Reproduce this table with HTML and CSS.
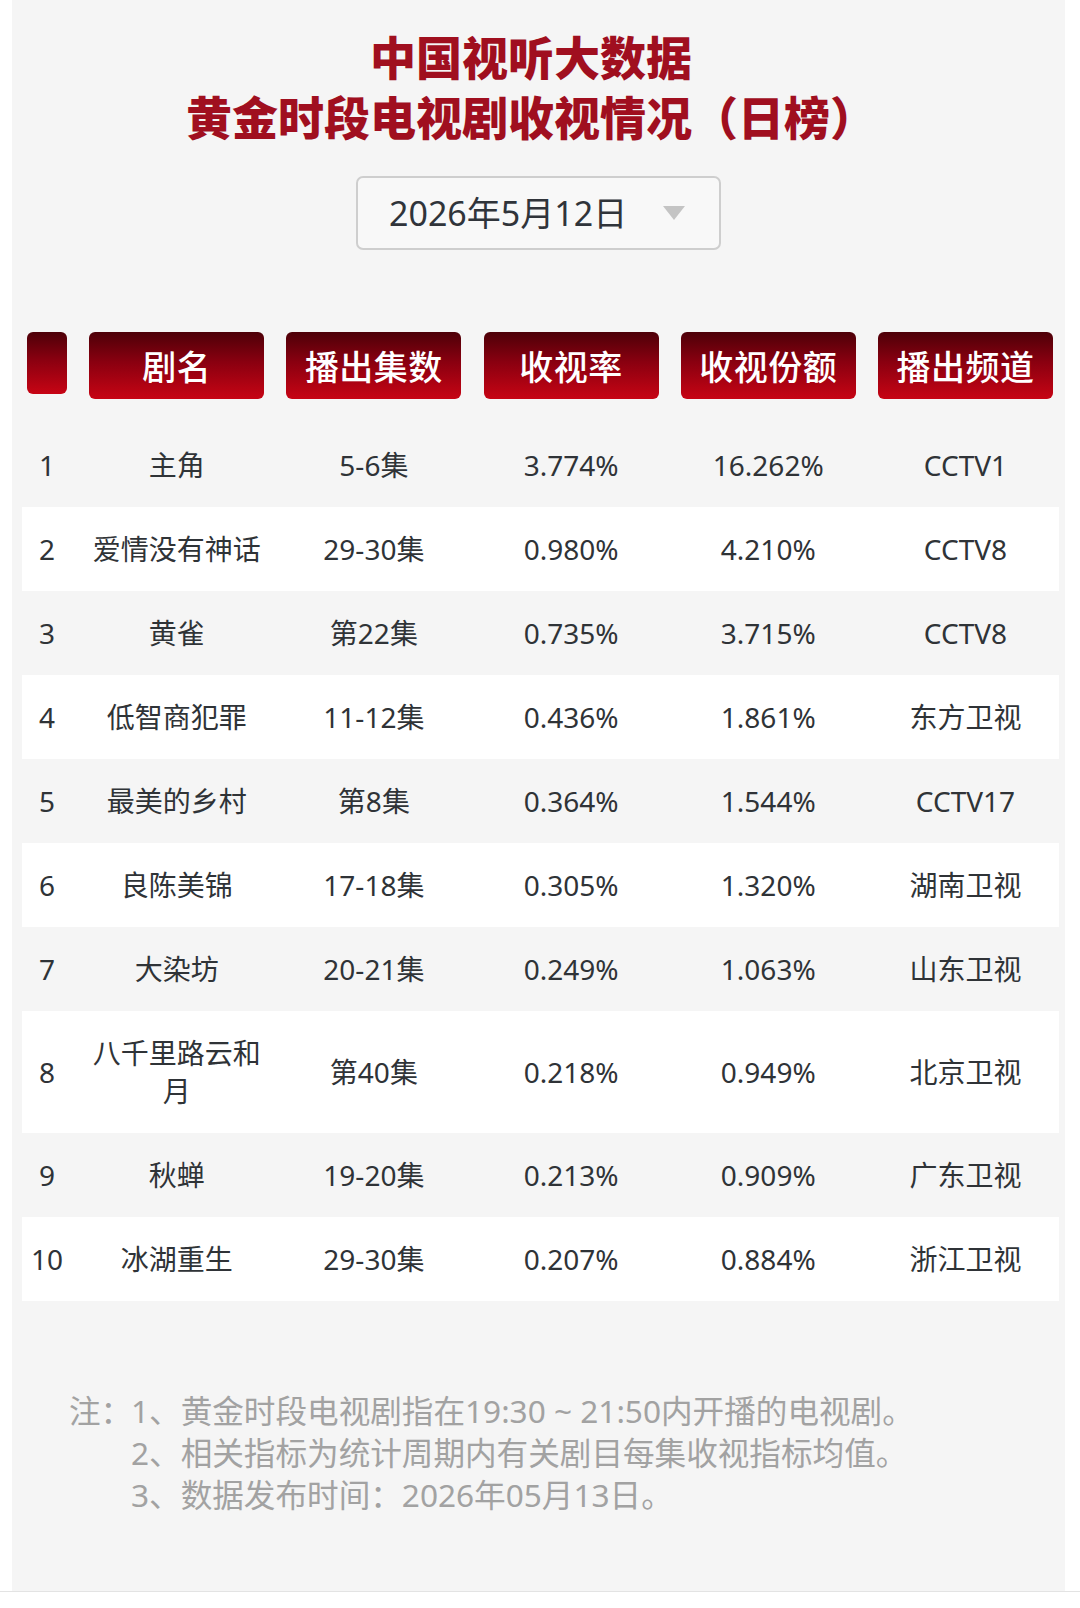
FILE: index.html
```html
<!DOCTYPE html>
<html lang="zh-CN">
<head>
<meta charset="utf-8">
<title>中国视听大数据 黄金时段电视剧收视情况（日榜）</title>
<link rel="stylesheet" href="styles.css">
</head>
<body>
<div class="page">
  <div class="panel">
    <h1 class="title">
      <span>中国视听大数据</span>
      <span>黄金时段电视剧收视情况（日榜）</span>
    </h1>
    <div class="date-row">
      <div class="date-select">
        <span class="date-text">2026年5月12日</span>
        <span class="caret"></span>
      </div>
    </div>
    <div class="table">
      <div class="thead">
        <div class="th th-idx"></div>
        <div class="th">剧名</div>
        <div class="th">播出集数</div>
        <div class="th">收视率</div>
        <div class="th">收视份额</div>
        <div class="th">播出频道</div>
      </div>
      <div class="tbody">
        <div class="row"><div class="cell idx">1</div><div class="cell">主角</div><div class="cell">5-6集</div><div class="cell">3.774%</div><div class="cell">16.262%</div><div class="cell">CCTV1</div></div>
        <div class="row"><div class="cell idx">2</div><div class="cell">爱情没有神话</div><div class="cell">29-30集</div><div class="cell">0.980%</div><div class="cell">4.210%</div><div class="cell">CCTV8</div></div>
        <div class="row"><div class="cell idx">3</div><div class="cell">黄雀</div><div class="cell">第22集</div><div class="cell">0.735%</div><div class="cell">3.715%</div><div class="cell">CCTV8</div></div>
        <div class="row"><div class="cell idx">4</div><div class="cell">低智商犯罪</div><div class="cell">11-12集</div><div class="cell">0.436%</div><div class="cell">1.861%</div><div class="cell">东方卫视</div></div>
        <div class="row"><div class="cell idx">5</div><div class="cell">最美的乡村</div><div class="cell">第8集</div><div class="cell">0.364%</div><div class="cell">1.544%</div><div class="cell">CCTV17</div></div>
        <div class="row"><div class="cell idx">6</div><div class="cell">良陈美锦</div><div class="cell">17-18集</div><div class="cell">0.305%</div><div class="cell">1.320%</div><div class="cell">湖南卫视</div></div>
        <div class="row"><div class="cell idx">7</div><div class="cell">大染坊</div><div class="cell">20-21集</div><div class="cell">0.249%</div><div class="cell">1.063%</div><div class="cell">山东卫视</div></div>
        <div class="row"><div class="cell idx">8</div><div class="cell">八千里路云和月</div><div class="cell">第40集</div><div class="cell">0.218%</div><div class="cell">0.949%</div><div class="cell">北京卫视</div></div>
        <div class="row"><div class="cell idx">9</div><div class="cell">秋蝉</div><div class="cell">19-20集</div><div class="cell">0.213%</div><div class="cell">0.909%</div><div class="cell">广东卫视</div></div>
        <div class="row"><div class="cell idx">10</div><div class="cell">冰湖重生</div><div class="cell">29-30集</div><div class="cell">0.207%</div><div class="cell">0.884%</div><div class="cell">浙江卫视</div></div>
      </div>
    </div>
    <div class="notes">
      <div class="notes-label">注：</div>
      <div class="notes-list">
        <div>1、黄金时段电视剧指在19:30 ~ 21:50内开播的电视剧。</div>
        <div>2、相关指标为统计周期内有关剧目每集收视指标均值。</div>
        <div>3、数据发布时间：2026年05月13日。</div>
      </div>
    </div>
  </div>
</div>
</body>
</html>
```

FILE: styles.css
```css
html, body {
  margin: 0;
  padding: 0;
  background: #ffffff;
}

body {
  font-family: "Noto Sans", "Noto Sans CJK SC", sans-serif;
  color: #2f3337;
}

.page {
  width: 1080px;
  border-bottom: 1px solid #e3e3e3;
}

.panel {
  margin-left: 12px;
  width: 1053px;
  height: 1591px;
  box-sizing: border-box;
  background: #f5f5f5;
  padding-top: 25px;
}

.title {
  margin: 0;
  padding-right: 15px;
  display: flex;
  flex-direction: column;
  align-items: center;
  font-family: "Noto Sans CJK SC", sans-serif;
  font-size: 46px;
  line-height: 60px;
  font-weight: 900;
  color: #a00f1f;
}

.date-row {
  margin-top: 31px;
  display: flex;
  justify-content: center;
}

.date-select {
  width: 365px;
  height: 74px;
  box-sizing: border-box;
  border: 2px solid #cecece;
  border-radius: 7px;
  background: #f8f8f8;
  display: flex;
  align-items: center;
  padding-left: 31px;
  padding-right: 34px;
}

.date-text {
  font-size: 34px;
  color: #30343a;
  line-height: 1;
}

.caret {
  margin-left: auto;
  width: 0;
  height: 0;
  border-left: 11px solid transparent;
  border-right: 11px solid transparent;
  border-top: 14px solid #c4c4c4;
}

.table {
  margin-top: 82px;
  margin-left: 10px;
  width: 1037px;
}

.thead,
.row {
  display: grid;
  grid-template-columns: 40px repeat(5, 175px);
  column-gap: 22.2px;
  padding-left: 5px;
}

.thead {
  align-items: start;
}

.th {
  height: 67px;
  border-radius: 6px;
  background: linear-gradient(to bottom, #4d0008 0%, #8a0010 45%, #c70414 100%);
  color: #ffffff;
  font-family: "Noto Sans CJK SC", sans-serif;
  font-size: 34px;
  font-weight: 500;
  display: flex;
  align-items: center;
  justify-content: center;
  letter-spacing: 0.5px;
}

.th-idx {
  height: 62px;
}

.tbody {
  margin-top: 24px;
}

.row {
  align-items: center;
  min-height: 84px;
}

.row:nth-child(even) {
  background: #ffffff;
}

.cell {
  padding: 23px 0;
  font-size: 28px;
  line-height: 38px;
  text-align: center;
  color: #2f3337;
}

.notes {
  margin-top: 89px;
  padding-left: 57px;
  display: grid;
  grid-template-columns: 62px auto;
  font-size: 31.6px;
  line-height: 42px;
  color: #a2a2a2;
}
```
